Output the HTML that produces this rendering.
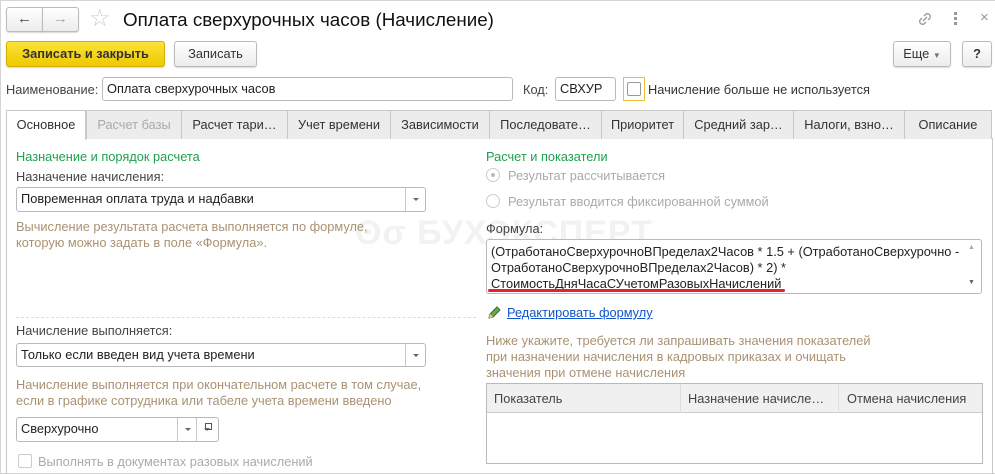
<!DOCTYPE html>
<html><head><meta charset="utf-8"><style>
*{box-sizing:border-box;margin:0;padding:0}
body{width:995px;height:474px;background:#fff;font-family:"Liberation Sans",Arial,sans-serif;font-size:12.8px;color:#333;position:relative;overflow:hidden}
.a{position:absolute;white-space:nowrap}
.btn{position:absolute;border:1px solid #bbb;border-radius:3px;background:linear-gradient(#fff,#ececec);box-shadow:0 1px 1px rgba(0,0,0,.15);text-align:center;line-height:23px;color:#333}
.inp{position:absolute;border:1px solid #b9b9b9;border-radius:3px;background:#fff;padding-left:4px;line-height:22px;color:#222}
.tab{position:absolute;top:110px;height:29px;border:1px solid #c8c8c8;border-bottom:none;background:#ececec;text-align:center;line-height:28px;color:#333}
.hint{color:#a99272}
.green{color:#1ea050}
.dd{position:absolute;top:0;width:20px;height:100%;border-left:1px solid #c8c8c8}
.dd:after{content:"";position:absolute;left:7px;top:10px;border-left:3px solid transparent;border-right:3px solid transparent;border-top:3px solid #666}
</style></head><body>
<div class="a" style="left:0;top:0;width:995px;height:474px;border:1px solid #d5d5d5;border-right:none"></div>
<div class="btn" style="left:6px;top:7px;width:37px;height:25px;border-radius:3px 0 0 3px;font-size:15px;line-height:22px;color:#444">&#x2190;</div>
<div class="btn" style="left:42px;top:7px;width:37px;height:25px;border-radius:0 3px 3px 0;font-size:15px;line-height:22px;color:#aaa">&#x2192;</div>
<div class="a" style="left:89px;top:4px;font-size:24px;color:#ccc">☆</div>
<div class="a" style="left:123px;top:9px;font-size:18.8px;color:#111">Оплата сверхурочных часов (Начисление)</div>
<svg class="a" style="left:916px;top:10px" width="18" height="18" viewBox="0 0 18 18" fill="none" stroke="#999" stroke-width="1.3"><path d="M8 6l2-2a3 3 0 0 1 4 4l-2 2M10 12l-2 2a3 3 0 0 1-4-4l2-2M7 11l4-4"/></svg>
<div class="a" style="left:954px;top:12px;width:3px;height:3px;background:#999;box-shadow:0 5px 0 #999,0 10px 0 #999"></div>
<div class="a" style="left:980px;top:9px;font-size:15px;color:#999">×</div>
<div class="btn" style="left:6px;top:41px;width:159px;height:26px;background:linear-gradient(#fbe33a,#efc900);border-color:#d4ae00;font-weight:bold;color:#333">Записать и закрыть</div>
<div class="btn" style="left:174px;top:41px;width:83px;height:26px">Записать</div>
<div class="btn" style="left:893px;top:41px;width:58px;height:26px">Еще <span style="font-size:8px;color:#777">▼</span></div>
<div class="btn" style="left:962px;top:41px;width:30px;height:26px;font-weight:bold">?</div>
<div class="a" style="left:6px;top:82px;color:#444">Наименование:</div>
<div class="inp" style="left:102px;top:77px;width:411px;height:24px">Оплата сверхурочных часов</div>
<div class="a" style="left:523px;top:82px;color:#444">Код:</div>
<div class="inp" style="left:555px;top:77px;width:61px;height:24px">СВХУР</div>
<div class="a" style="left:623px;top:77px;width:22px;height:24px;border:1px solid #f0c030"></div>
<div class="a" style="left:627px;top:82px;width:14px;height:14px;border:1px solid #999;border-radius:2px"></div>
<div class="a" style="left:648px;top:82px">Начисление больше не используется</div>
<div class="a" style="left:6px;top:138px;width:987px;height:336px;border:1px solid #c8c8c8;border-bottom:none"></div>
<div class="tab" style="left:6px;width:80px;background:#fff;height:30px">Основное</div>
<div class="tab" style="left:86px;width:96px;color:#aaa">Расчет базы</div>
<div class="tab" style="left:181px;width:107px">Расчет тари…</div>
<div class="tab" style="left:287px;width:104px">Учет времени</div>
<div class="tab" style="left:390px;width:100px">Зависимости</div>
<div class="tab" style="left:489px;width:113px">Последовате…</div>
<div class="tab" style="left:601px;width:83px">Приоритет</div>
<div class="tab" style="left:683px;width:111px">Средний зар…</div>
<div class="tab" style="left:793px;width:112px">Налоги, взно…</div>
<div class="tab" style="left:904px;width:88px">Описание</div>
<div class="a" style="left:355px;top:214px;font-size:34px;font-weight:bold;color:#f2f2f2;letter-spacing:1px">ʘσ БУХЭКСПЕРТ</div>
<div class="a green" style="left:16px;top:149px">Назначение и порядок расчета</div>
<div class="a" style="left:16px;top:169px;color:#444">Назначение начисления:</div>
<div class="inp" style="left:16px;top:187px;width:410px;height:25px">Повременная оплата труда и надбавки<div class="dd" style="right:0"></div></div>
<div class="a hint" style="left:16px;top:219px;line-height:16px">Вычисление результата расчета выполняется по формуле,<br>которую можно задать в поле «Формула».</div>
<div class="a" style="left:16px;top:317px;width:460px;border-top:1px dashed #ddd"></div>
<div class="a" style="left:16px;top:323px;color:#444">Начисление выполняется:</div>
<div class="inp" style="left:16px;top:343px;width:410px;height:24px">Только если введен вид учета времени<div class="dd" style="right:0"></div></div>
<div class="a hint" style="left:16px;top:377px;line-height:16px">Начисление выполняется при окончательном расчете в том случае,<br>если в графике сотрудника или табеле учета времени введено</div>
<div class="inp" style="left:16px;top:417px;width:203px;height:25px">Сверхурочно<div class="dd" style="right:21px"></div><div class="dd" style="right:0;width:22px"></div></div>
<div class="a" style="left:205px;top:423px;width:7px;height:7px;border:1px solid #555"></div>
<div class="a" style="left:18px;top:454px;width:14px;height:14px;border:1px solid #ccc;border-radius:2px"></div>
<div class="a" style="left:38px;top:454px;color:#aaa">Выполнять в документах разовых начислений</div>
<div class="a green" style="left:486px;top:149px">Расчет и показатели</div>
<div class="a" style="left:486px;top:168px;width:14px;height:14px;border:1px solid #ccc;border-radius:50%"></div>
<div class="a" style="left:491px;top:173px;width:4px;height:4px;background:#bbb;border-radius:50%"></div>
<div class="a" style="left:508px;top:168px;color:#aaa">Результат рассчитывается</div>
<div class="a" style="left:486px;top:194px;width:14px;height:14px;border:1px solid #ccc;border-radius:50%"></div>
<div class="a" style="left:508px;top:194px;color:#aaa">Результат вводится фиксированной суммой</div>
<div class="a" style="left:486px;top:221px;color:#444">Формула:</div>
<div class="inp" style="left:486px;top:239px;width:496px;height:55px;line-height:16px;padding-top:4px">(ОтработаноСверхурочноВПределах2Часов * 1.5 + (ОтработаноСверхурочно -<br>ОтработаноСверхурочноВПределах2Часов) * 2) *<br>СтоимостьДняЧасаСУчетомРазовыхНачислений</div>
<div class="a" style="left:968px;top:244px;font-size:7px;color:#aaa">▲</div>
<div class="a" style="left:968px;top:279px;font-size:7px;color:#666">▼</div>
<div class="a" style="left:488px;top:289px;width:297px;height:3px;background:#e8202a;border-radius:2px"></div>
<svg class="a" style="left:487px;top:305px" width="15" height="15" viewBox="0 0 15 15"><path d="M2 13l1-4 7-7 3 3-7 7z" fill="#6aa84f" stroke="#3a6d2a"/><path d="M2 13l1-4 3 3z" fill="#f0d090"/></svg>
<div class="a" style="left:507px;top:305px;color:#1155cc;text-decoration:underline">Редактировать формулу</div>
<div class="a hint" style="left:486px;top:333px;line-height:16px">Ниже укажите, требуется ли запрашивать значения показателей<br>при назначении начисления в кадровых приказах и очищать<br>значения при отмене начисления</div>
<div class="a" style="left:486px;top:383px;width:497px;height:81px;border:1px solid #b9b9b9"></div>
<div class="a" style="left:487px;top:384px;width:495px;height:29px;background:#f0f0f0;border-bottom:1px solid #ccc"></div>
<div class="a" style="left:680px;top:384px;height:29px;border-left:1px solid #ddd"></div>
<div class="a" style="left:838px;top:384px;height:29px;border-left:1px solid #ddd"></div>
<div class="a" style="left:494px;top:391px;color:#444">Показатель</div>
<div class="a" style="left:688px;top:391px;color:#444">Назначение начисле…</div>
<div class="a" style="left:847px;top:391px;color:#444">Отмена начисления</div>
</body></html>
